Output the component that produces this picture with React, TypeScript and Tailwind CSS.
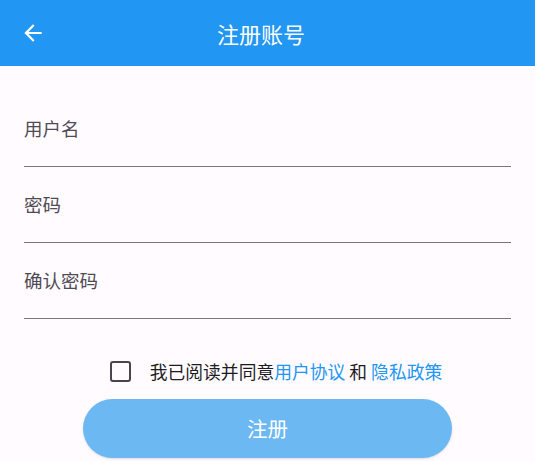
import React from 'react';

const font = { fontFamily: '"Noto Sans CJK SC", "Noto Sans", sans-serif' };

// Material arrow_back
const BackIcon = () => (
  <svg width="26" height="26" viewBox="0 0 24 24" fill="white">
    <path d="M20 11H7.83l5.59-5.59L12 4l-8 8 8 8 1.41-1.41L7.83 13H20v-2z" />
  </svg>
);

const Field: React.FC<{ label: string }> = ({ label }) => (
  <div className="h-[76px] flex items-center border-b border-[#79747e]">
    <span className="text-[18.5px] text-[#4f4b55]">{label}</span>
  </div>
);

export default function App() {
  return (
    <div className="w-[535px] h-[461px] bg-[#fffbfe] overflow-hidden" style={font}>
      {/* App bar */}
      <header className="h-[66px] bg-[#2196f3] flex items-center pl-[20px]">
        <button className="w-[26px] h-[26px] flex items-center justify-center">
          <BackIcon />
        </button>
        <h1 className="flex-1 text-center text-[22px] text-white pr-[59px]">注册账号</h1>
      </header>

      {/* Form */}
      <div className="px-6 pt-[25px]">
        <Field label="用户名" />
        <Field label="密码" />
        <Field label="确认密码" />
      </div>

      {/* Agreement */}
      <div className="mt-[28px] h-[48px] flex items-center justify-center pl-[17px]">
        <span className="w-[21px] h-[21px] border-2 border-[#49454f] rounded-[3px]" />
        <p className="ml-[19px] text-[17.8px] text-[#1c1b1f]">
          我已阅读并同意<span className="text-[#2196f3]">用户协议</span> 和 <span className="text-[#2196f3]">隐私政策</span>
        </p>
      </div>

      {/* Submit */}
      <div className="mt-[4px] flex justify-center">
        <button className="w-[369px] h-[59px] rounded-full bg-[#6cb8f2] text-white text-[20.5px] shadow-sm">
          注册
        </button>
      </div>
    </div>
  );
}
